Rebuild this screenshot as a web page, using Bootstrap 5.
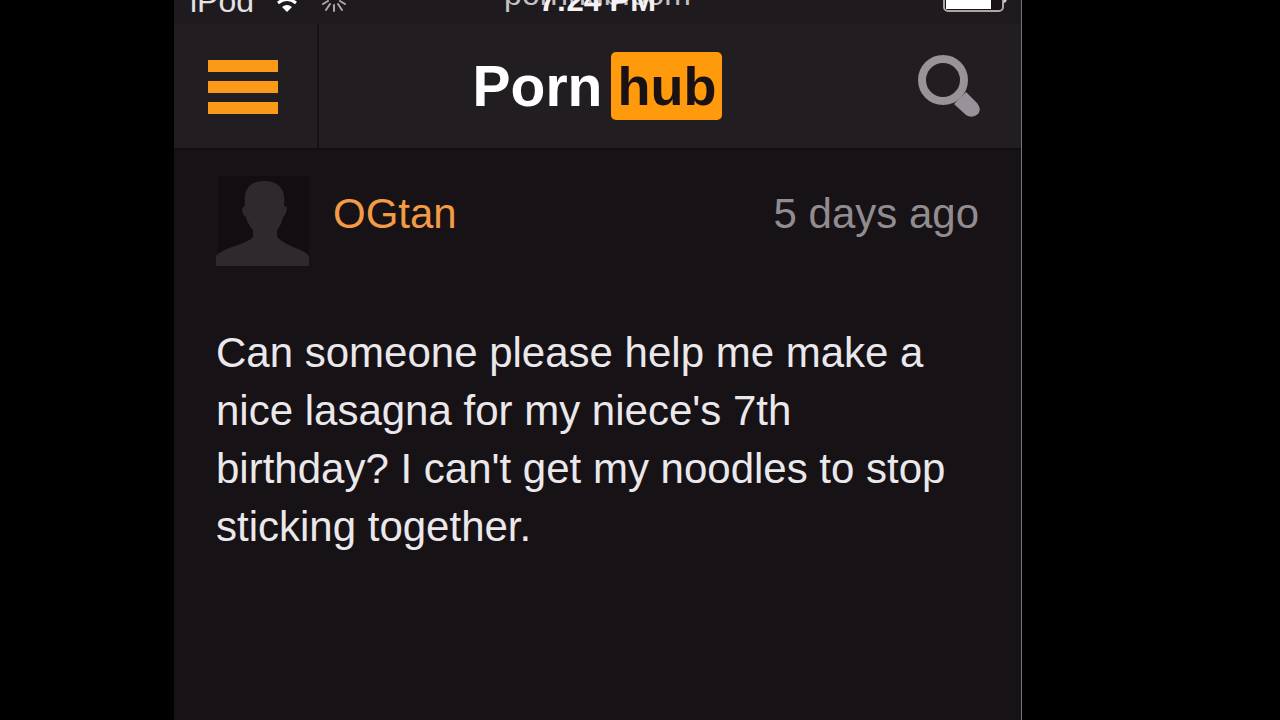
<!DOCTYPE html>
<html lang="en">
<head>
<meta charset="utf-8">
<meta name="viewport" content="width=device-width, initial-scale=1">
<title>Comment</title>
<link href="https://cdn.jsdelivr.net/npm/bootstrap@5.3.0/dist/css/bootstrap.min.css" rel="stylesheet">
<style>
body { background: #000; font-family: "Liberation Sans", Arial, sans-serif; }
.stage { display: grid; grid-template-columns: 174fr 848fr 258fr; }
.phone { grid-column: 2; background: #171216; border-right: 1px solid #777478; }
.status { height: 24px; background: #1f1a1d; color: #e4e0e4; font-size: 32px; line-height: 32px; padding: 0 14px 7px 16px; }
.status .clock { left: 50%; bottom: 7px; transform: translateX(-50%); font-size: 31px; font-weight: 700; color: #f4f2f4; }
.status .site { left: 50%; bottom: 14px; transform: translateX(-50%); color: #c4c0c4; }
.status svg { margin-bottom: 3px; }
.topbar { height: 126px; background: #221d21; border-bottom: 2px solid #120e11; }
.side-btn { width: 145px; }
.menu-btn { border-right: 2px solid #151114; padding: 2px 6px 0 0; }
.brand { font-size: 57px; line-height: 68px; font-weight: 700; color: #fff; gap: 9px; }
.brand .tag { background: #ff9a0c; color: #1a1114; border-radius: 5px; font-size: 54px; padding: 0 6px; }
.comment { padding: 26px 42px; }
.byline { font-size: 42px; line-height: 76px; }
.who { color: #f39a45; }
.when { color: #918c90; }
.message { margin-top: 58px; color: #ebe8eb; font-size: 42px; line-height: 58px; }
</style>
</head>
<body>
<div class="stage min-vh-100 overflow-hidden">
  <main class="phone">
    <div class="status position-relative d-flex align-items-end">
      <span>iPod</span>
      <svg class="ms-3" width="34" height="28" viewBox="0 0 34 28" aria-hidden="true">
        <path d="M17 26l-5-5q5-4 10 0z" fill="#fff"/>
        <path d="M8 17q9-7 18 0" fill="none" stroke="#fff" stroke-width="3"/>
      </svg>
      <svg class="ms-3" width="28" height="28" viewBox="0 0 28 28" stroke="#aaa6aa" stroke-width="2" stroke-linecap="round" aria-hidden="true">
        <path d="M14 19v6M10 18l-4 6M18 18l4 6M8 15l-5 3M20 15l5 3M9 11H2M19 11h7"/>
      </svg>
      <span class="site position-absolute">pornhub.com</span>
      <span class="clock position-absolute text-nowrap">7:24 PM</span>
      <svg class="ms-auto" width="64" height="28" viewBox="0 0 64 28" aria-hidden="true">
        <rect x="1" y="1" width="59" height="24" rx="4" fill="#171216" stroke="#aaa6aa" stroke-width="2"/>
        <path d="M3 3h45v20H3z" fill="#fff"/>
        <path d="M61 8q3 0 3 4t-3 5z" fill="#d8d4d8"/>
      </svg>
    </div>
    <header class="topbar d-flex align-items-stretch">
      <button class="side-btn menu-btn btn rounded-0 border-top-0 border-bottom-0 border-start-0" type="button" aria-label="Menu">
        <svg width="70" height="54" viewBox="0 0 70 54" fill="#fb9a18"><path d="M0 0h70v12H0zM0 21h70v12H0zM0 42h70v12H0z"/></svg>
      </button>
      <a class="brand flex-grow-1 d-flex align-items-center justify-content-center text-decoration-none" href="#"><span>Porn</span><span class="tag">hub</span></a>
      <button class="side-btn btn border-0 p-0" type="button" aria-label="Search">
        <svg width="64" height="64" viewBox="0 0 64 64">
          <circle cx="26" cy="26" r="21" fill="none" stroke="#989398" stroke-width="8"/>
          <path d="M37 50L49 38L60 49Q65 55 61 60Q55 65 49 61Z" fill="#989398"/>
        </svg>
      </button>
    </header>
    <article class="comment">
      <div class="byline d-flex align-items-start gap-4">
        <svg width="93" height="90" viewBox="0 0 93 90" role="img" aria-label="Avatar">
          <path d="M2 0h91v90H2z" fill="#110d10"/>
          <path d="M0 90V80Q4 75 16 71Q37 64 37 60V54Q31 47 30 41Q26 39 26 33Q27 30 29 30Q26 5 48 5Q71 5 68 30Q71 30 71 33Q70 39 67 41Q66 48 61 54V60Q62 64 77 71Q89 75 93 80V90Z" fill="#2d292d"/>
        </svg>
        <a class="who text-decoration-none" href="#">OGtan</a>
        <time class="when ms-auto">5 days ago</time>
      </div>
      <p class="message pe-4 mb-0">Can someone please help me make a nice lasagna for my niece's 7th birthday? I can't get my noodles to stop sticking together.</p>
    </article>
  </main>
</div>
<script src="https://cdn.jsdelivr.net/npm/bootstrap@5.3.0/dist/js/bootstrap.bundle.min.js"></script>
</body>
</html>
